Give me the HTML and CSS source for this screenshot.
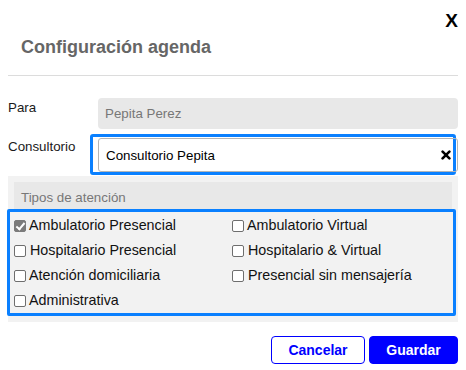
FILE: index.html
```html
<!DOCTYPE html>
<html lang="es">
<head>
<meta charset="utf-8">
<title>Configuración agenda</title>
<link rel="stylesheet" href="styles.css">
</head>
<body>
<div class="modal">
  <div class="close-row"><button class="close" type="button">X</button></div>
  <h2 class="title">Configuración agenda</h2>
  <div class="divider"></div>

  <div class="form-row row-para">
    <label class="label">Para</label>
    <div class="input readonly">Pepita Perez</div>
  </div>

  <div class="form-row row-cons">
    <label class="label label-cons">Consultorio</label>
    <div class="focus-box">
      <div class="input select">
        <span class="select-text">Consultorio Pepita</span>
        <svg class="clear" width="10" height="10" viewBox="0 0 10 10" aria-hidden="true">
          <path d="M1.6 1.6 L8.4 8.4 M8.4 1.6 L1.6 8.4" stroke="#000" stroke-width="2.6" stroke-linecap="round"/>
        </svg>
      </div>
    </div>
  </div>

  <div class="panel">
    <div class="panel-head">Tipos de atención</div>
    <div class="checks">
      <label class="check"><input type="checkbox" class="box" checked>Ambulatorio Presencial</label>
      <label class="check"><input type="checkbox" class="box">Ambulatorio Virtual</label>
      <label class="check shift"><input type="checkbox" class="box">Hospitalario Presencial</label>
      <label class="check shift"><input type="checkbox" class="box">Hospitalario &amp; Virtual</label>
      <label class="check"><input type="checkbox" class="box">Atención domiciliaria</label>
      <label class="check shift"><input type="checkbox" class="box">Presencial sin mensajería</label>
      <label class="check"><input type="checkbox" class="box">Administrativa</label>
    </div>
  </div>

  <div class="actions">
    <button class="btn btn-outline" type="button">Cancelar</button>
    <button class="btn btn-primary" type="button">Guardar</button>
  </div>
</div>
</body>
</html>
```

FILE: styles.css
```css
* { box-sizing: border-box; }

html, body {
  margin: 0;
  padding: 0;
  background: #fff;
}

body {
  font-family: "Liberation Sans", Arial, sans-serif;
  font-size: 13.33px;
  color: #1a1a1a;
}

.modal {
  width: 466px;
  padding: 0 8px;
}

.close-row {
  display: flex;
  justify-content: flex-end;
  padding-top: 11px;
}

.close {
  border: 0;
  background: none;
  padding: 0;
  margin: 0;
  font-family: "Liberation Sans", Arial, sans-serif;
  font-weight: bold;
  font-size: 19px;
  line-height: 20px;
  color: #000;
}

.title {
  margin: 4px 0 0;
  padding-left: 13px;
  font-size: 18px;
  line-height: 24px;
  font-weight: bold;
  color: #666;
}

.divider {
  margin-top: 16px;
  height: 1px;
  background: #dcdcdc;
}

.form-row {
  display: grid;
  grid-template-columns: 82px 1fr;
  align-items: start;
}

.row-para { margin-top: 22px; }
.row-cons { margin-top: 5px; }

.label {
  line-height: 20px;
  color: #1a1a1a;
}

.label-cons { padding-top: 3px; }

.input {
  display: flex;
  align-items: center;
  border-radius: 4px;
}

.readonly {
  margin-left: 8px;
  width: 360px;
  height: 31px;
  padding-left: 7px;
  background: #e8e8e8;
  color: #777;
}

.focus-box {
  width: 366px;
  height: 41px;
  border: 3px solid #0a80ff;
  border-radius: 3px;
  padding: 1px 0 0 5px;
  background: #fff;
}

.select {
  width: 360px;
  height: 34px;
  border: 1px solid #b5b5b5;
  border-radius: 3px;
  background: transparent;
  padding: 0 6px 0 7px;
  color: #000;
  justify-content: space-between;
}

.clear { display: block; }

.panel {
  margin-top: 1px;
  background: #f2f2f2;
  padding: 6px 6px 6px 6px;
}

.panel-head {
  height: 27px;
  padding: 4px 0 0 7px;
  line-height: 23px;
  background: #e8e8e8;
  color: #777;
}

.checks {
  margin: 0 -4px 0 -7px;
  border: 3px solid #0a80ff;
  border-radius: 2px;
  padding: 1px 0 0 4px;
  display: grid;
  grid-template-columns: 218px 1fr;
  grid-auto-rows: 25px;
}

.check {
  display: flex;
  align-items: center;
  line-height: 25px;
  font-size: 14.3px;
  color: #111;
}

.box {
  appearance: none;
  -webkit-appearance: none;
  width: 12px;
  height: 12px;
  margin: 0 3px 0 0;
  border: 1px solid #6e6e6e;
  border-radius: 2px;
  background: #fff;
  position: relative;
  flex: none;
}

.shift .box { margin-right: 4px; }

.box:checked {
  background: #7b7b7b;
  border-color: #7b7b7b;
}

.box:checked::after {
  content: "";
  position: absolute;
  left: 3px;
  top: 0px;
  width: 3px;
  height: 7px;
  border: solid #fff;
  border-width: 0 2px 2px 0;
  transform: rotate(40deg);
}

.actions {
  display: flex;
  justify-content: flex-end;
  gap: 4px;
  margin-top: 14px;
}

.btn {
  height: 28px;
  padding: 0;
  border-radius: 4px;
  border: 1px solid #0000ff;
  font-family: "Liberation Sans", Arial, sans-serif;
  font-size: 14px;
  font-weight: bold;
  line-height: 26px;
  text-align: center;
}

.btn-outline {
  width: 94px;
  background: #fff;
  color: #0000ff;
}

.btn-primary {
  width: 89px;
  background: #0000ff;
  color: #fff;
}
```
